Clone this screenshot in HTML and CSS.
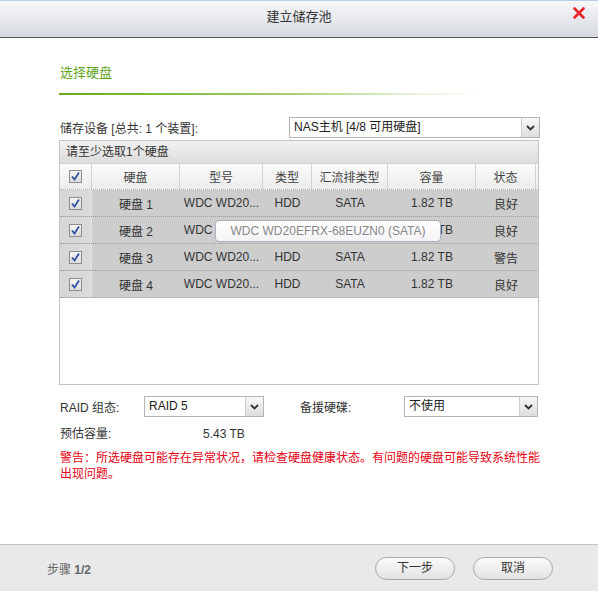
FILE: index.html
```html
<!DOCTYPE html>
<html lang="zh-CN">
<head>
<meta charset="utf-8">
<title>建立储存池</title>
<link rel="stylesheet" href="styles.css">
</head>
<body>
<div class="dialog">
  <div class="titlebar">
    <span></span>
    <span class="title">建立储存池</span>
    <span class="close">
      <svg width="12" height="12" viewBox="0 0 12 12"><path d="M1.5 1.5 L10.5 10.5 M10.5 1.5 L1.5 10.5" stroke="#e8232a" stroke-width="2.6" stroke-linecap="round"/></svg>
    </span>
  </div>

  <div class="content">
    <div class="section-title">选择硬盘</div>
    <div class="section-line"></div>

    <div class="device-row">
      <span class="label">储存设备 [总共: 1 个装置]:</span>
      <div class="select wide">
        <span class="select-text">NAS主机 [4/8 可用硬盘]</span>
        <span class="select-arrow"><svg width="9" height="6" viewBox="0 0 9 6"><path d="M1 1 L4.5 4.5 L8 1" fill="none" stroke="#333" stroke-width="1.8"/></svg></span>
      </div>
    </div>

    <div class="grid">
      <div class="caption">请至少选取1个硬盘</div>
      <div class="row head">
        <div class="cell chk"><span class="cb"><svg width="11" height="11" viewBox="0 0 11 11"><path d="M2 5.5 L4.5 8.5 L9 1.5" fill="none" stroke="#2d4fa3" stroke-width="1.8"/></svg></span></div>
        <div class="cell">硬盘</div>
        <div class="cell">型号</div>
        <div class="cell">类型</div>
        <div class="cell">汇流排类型</div>
        <div class="cell">容量</div>
        <div class="cell">状态</div>
      </div>
      <div class="rows">
        <div class="row data">
          <div class="cell chk"><span class="cb"><svg width="11" height="11" viewBox="0 0 11 11"><path d="M2 5.5 L4.5 8.5 L9 1.5" fill="none" stroke="#2d4fa3" stroke-width="1.8"/></svg></span></div>
          <div class="cell">硬盘 1</div>
          <div class="cell">WDC WD20...</div>
          <div class="cell">HDD</div>
          <div class="cell">SATA</div>
          <div class="cell">1.82 TB</div>
          <div class="cell">良好</div>
        </div>
        <div class="row data">
          <div class="cell chk"><span class="cb"><svg width="11" height="11" viewBox="0 0 11 11"><path d="M2 5.5 L4.5 8.5 L9 1.5" fill="none" stroke="#2d4fa3" stroke-width="1.8"/></svg></span></div>
          <div class="cell">硬盘 2</div>
          <div class="cell">WDC WD20...</div>
          <div class="cell">HDD</div>
          <div class="cell">SATA</div>
          <div class="cell">1.82 TB</div>
          <div class="cell">良好</div>
        </div>
        <div class="row data">
          <div class="cell chk"><span class="cb"><svg width="11" height="11" viewBox="0 0 11 11"><path d="M2 5.5 L4.5 8.5 L9 1.5" fill="none" stroke="#2d4fa3" stroke-width="1.8"/></svg></span></div>
          <div class="cell">硬盘 3</div>
          <div class="cell">WDC WD20...</div>
          <div class="cell">HDD</div>
          <div class="cell">SATA</div>
          <div class="cell">1.82 TB</div>
          <div class="cell">警告</div>
        </div>
        <div class="row data">
          <div class="cell chk"><span class="cb"><svg width="11" height="11" viewBox="0 0 11 11"><path d="M2 5.5 L4.5 8.5 L9 1.5" fill="none" stroke="#2d4fa3" stroke-width="1.8"/></svg></span></div>
          <div class="cell">硬盘 4</div>
          <div class="cell">WDC WD20...</div>
          <div class="cell">HDD</div>
          <div class="cell">SATA</div>
          <div class="cell">1.82 TB</div>
          <div class="cell">良好</div>
        </div>
        <div class="tooltip">WDC WD20EFRX-68EUZN0 (SATA)</div>
      </div>
    </div>

    <div class="raid-row">
      <span class="raid-label">RAID 组态:</span>
      <div class="select raid">
        <span class="select-text">RAID 5</span>
        <span class="select-arrow"><svg width="9" height="6" viewBox="0 0 9 6"><path d="M1 1 L4.5 4.5 L8 1" fill="none" stroke="#333" stroke-width="1.8"/></svg></span>
      </div>
      <span class="spare-label">备援硬碟:</span>
      <div class="select spare">
        <span class="select-text">不使用</span>
        <span class="select-arrow"><svg width="9" height="6" viewBox="0 0 9 6"><path d="M1 1 L4.5 4.5 L8 1" fill="none" stroke="#333" stroke-width="1.8"/></svg></span>
      </div>
    </div>

    <div class="cap-row">
      <span class="cap-label">预估容量:</span>
      <span class="cap-value">5.43 TB</span>
    </div>

    <div class="warning">警告：所选硬盘可能存在异常状况，请检查硬盘健康状态。有问题的硬盘可能导致系统性能<br>出现问题。</div>
  </div>

  <div class="footer">
    <span class="step">步骤 <b>1/2</b></span>
    <div class="buttons">
      <span class="btn">下一步</span>
      <span class="btn">取消</span>
    </div>
  </div>
</div>
</body>
</html>
```

FILE: styles.css
```css
* { box-sizing: border-box; }
html, body { margin: 0; padding: 0; background: #fff; }
body {
  font-family: "Liberation Sans", "Noto Sans CJK SC", sans-serif;
  font-size: 12px;
  color: #333;
}
.dialog {
  width: 598px;
  height: 591px;
  display: flex;
  flex-direction: column;
  background: #fff;
}
.titlebar {
  height: 38px;
  flex: none;
  display: grid;
  grid-template-columns: 1fr auto 1fr;
  align-items: start;
  border-top: 1px solid #b8cde8;
  border-bottom: 1px solid #555;
  background: linear-gradient(#f7f8fa, #d5d9df);
}
.title {
  font-size: 13px;
  color: #333;
  line-height: 16px;
  padding-top: 8px;
}
.close {
  justify-self: end;
  padding: 6px 13px 0 0;
  line-height: 0;
}
.content {
  flex: 1;
  padding: 0 59px;
}
.section-title {
  margin-top: 27px;
  font-size: 13px;
  line-height: 16px;
  color: #5fa31a;
  padding-left: 1px;
}
.section-line {
  margin-top: 12px;
  height: 3px;
  border-top: 2px solid transparent;
  border-image: linear-gradient(90deg, #68aa1c 0%, #9fcc66 45%, rgba(220,236,200,0.6) 75%, rgba(255,255,255,0) 88%) 1;
  background: linear-gradient(90deg, #cfe4b4 0%, #e6f0d8 50%, rgba(255,255,255,0) 85%);
  background-clip: content-box;
  padding-top: 1px;
  width: 480px;
}
.device-row {
  margin-top: 21px;
  display: flex;
  justify-content: space-between;
  align-items: center;
  height: 21px;
  padding-left: 1px;
}
.label { color: #333; }
.select {
  display: flex;
  align-items: stretch;
  height: 21px;
  border: 1px solid #b4b4b4;
  background: #fff;
}
.select.wide { width: 251px; margin-right: -1px; }
.select-text {
  flex: 1;
  padding-left: 4px;
  line-height: 19px;
  color: #222;
}
.select-arrow {
  width: 18px;
  border-left: 1px solid #cfcfcf;
  background: linear-gradient(#f7f7f7, #dedede);
  display: flex;
  align-items: center;
  justify-content: center;
}
.grid {
  margin-top: 2px;
  height: 245px;
  border: 1px solid #c4c4c4;
  display: flex;
  flex-direction: column;
}
.caption {
  height: 23px;
  line-height: 22px;
  padding-left: 6px;
  background: linear-gradient(#f2f2f2, #dcdcdc);
  border-bottom: 1px solid #d0d0d0;
  color: #333;
}
.row {
  display: grid;
  grid-template-columns: 32px 88px 83px 49px 76px 88px 60px;
}
.row.head {
  height: 26px;
  background: linear-gradient(#fbfbfb, #ececec);
  border-bottom: 1px dotted #a8a8a8;
}
.row.head .cell {
  border-right: 1px solid #d2d2d2;
  color: #444;
}
.cell {
  display: flex;
  align-items: center;
  justify-content: center;
  white-space: nowrap;
  overflow: hidden;
}
.rows {
  position: relative;
  flex: 1;
}
.row.data {
  height: 27px;
  background: #cdcdcd;
  border-bottom: 1px dotted #9c9c9c;
  color: #333;
}
.row.data .cell.chk {
  background: linear-gradient(90deg, #d6d6d6, #dadada);
  border-right: 1px solid #e4e4e4;
}
.row.head .cell.chk { border-right: 1px solid #d2d2d2; }
.cb {
  width: 13px;
  height: 13px;
  border: 1px solid #8c8c8c;
  background: linear-gradient(#f4f4f4, #dcdcdc);
  display: flex;
  align-items: center;
  justify-content: center;
}
.tooltip {
  position: absolute;
  left: 155px;
  top: 30px;
  width: 226px;
  height: 22px;
  border: 1px solid #aeb0bf;
  border-radius: 4px;
  background: linear-gradient(#ffffff, #f4f4f8);
  color: #888;
  text-align: center;
  line-height: 20px;
}
.raid-row {
  margin-top: 11px;
  display: flex;
  align-items: center;
  height: 21px;
  padding-left: 1px;
}
.raid-label { width: 84px; }
.select.raid { width: 120px; }
.spare-label { width: 104px; margin-left: 36px; }
.select.spare { width: 134px; }
.cap-row {
  margin-top: 9px;
  display: flex;
  line-height: 16px;
  padding-left: 1px;
}
.cap-label { width: 143px; }
.warning {
  margin-top: 8px;
  color: #e60012;
  line-height: 16px;
  white-space: nowrap;
  padding-left: 1px;
}
.footer {
  height: 47px;
  flex: none;
  border-top: 1px solid #c2c2c2;
  background: #e9e9e9;
  display: flex;
  align-items: center;
  justify-content: space-between;
  padding: 0 45px 0 47px;
}
.step { color: #666; }
.step b { font-weight: bold; color: #666; }
.buttons { display: flex; gap: 18px; }
.btn {
  width: 80px;
  height: 23px;
  border: 1px solid #a9a9a9;
  border-radius: 12px;
  background: linear-gradient(#fafafa, #e2e2e2);
  text-align: center;
  line-height: 21px;
  color: #333;
}
```
